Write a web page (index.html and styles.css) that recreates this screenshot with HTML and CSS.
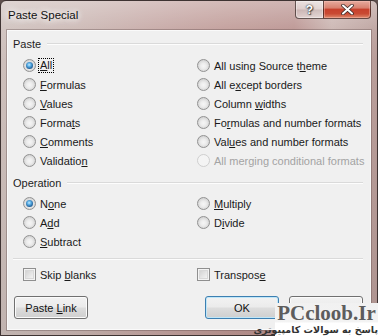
FILE: index.html
```html
<!DOCTYPE html>
<html>
<head>
<meta charset="utf-8">
<link rel="stylesheet" href="styles.css">
</head>
<body>
<div class="window">
  <div class="titlebar">
    <span class="title">Paste Special</span>
    <div class="caption-buttons">
      <div class="cap-btn help"><span>?</span></div>
      <div class="cap-btn close">
        <svg width="13" height="11" viewBox="0 0 13 11">
          <path d="M2 1.5 L11 9.5 M11 1.5 L2 9.5" stroke="#3a2a28" stroke-width="3.6" stroke-linecap="round"/>
          <path d="M2 1.5 L11 9.5 M11 1.5 L2 9.5" stroke="#ffffff" stroke-width="2" stroke-linecap="round"/>
        </svg>
      </div>
    </div>
  </div>
  <div class="client">
    <div class="group-label"><span>Paste</span><div class="gl-line"></div></div>
    <div class="opts paste-opts">
      <label class="opt"><span class="radio checked"></span><span class="focus"><u>A</u>ll</span></label>
      <label class="opt"><span class="radio"></span><span><u>F</u>ormulas</span></label>
      <label class="opt"><span class="radio"></span><span><u>V</u>alues</span></label>
      <label class="opt"><span class="radio"></span><span>Forma<u>t</u>s</span></label>
      <label class="opt"><span class="radio"></span><span><u>C</u>omments</span></label>
      <label class="opt"><span class="radio"></span><span>Validatio<u>n</u></span></label>
      <label class="opt"><span class="radio"></span><span>All using Source t<u>h</u>eme</span></label>
      <label class="opt"><span class="radio"></span><span>All e<u>x</u>cept borders</span></label>
      <label class="opt"><span class="radio"></span><span>Column <u>w</u>idths</span></label>
      <label class="opt"><span class="radio"></span><span>Fo<u>r</u>mulas and number formats</span></label>
      <label class="opt"><span class="radio"></span><span>Val<u>u</u>es and number formats</span></label>
      <label class="opt disabled"><span class="radio"></span><span>All merging conditional formats</span></label>
    </div>
    <div class="group-label op-label"><span>Operation</span><div class="gl-line"></div></div>
    <div class="opts op-opts">
      <label class="opt"><span class="radio checked"></span><span>N<u>o</u>ne</span></label>
      <label class="opt"><span class="radio"></span><span>A<u>d</u>d</span></label>
      <label class="opt"><span class="radio"></span><span><u>S</u>ubtract</span></label>
      <label class="opt"><span class="radio"></span><span><u>M</u>ultiply</span></label>
      <label class="opt"><span class="radio"></span><span>D<u>i</u>vide</span></label>
    </div>
    <div class="separator"></div>
    <div class="opts check-opts">
      <label class="opt"><span class="check"></span><span>Skip <u>b</u>lanks</span></label>
      <label class="opt"><span class="check"></span><span>Transpos<u>e</u></span></label>
    </div>
    <div class="buttons">
      <button class="btn">Paste <u>L</u>ink</button>
      <div class="spacer"></div>
      <button class="btn default">OK</button>
      <button class="btn cancel"><span class="btn-text">Cancel</span></button>
    </div>
  </div>
</div>
<div class="watermark">
  <div class="wm-title">PCcloob.Ir</div>
  <div class="wm-sub">پاسخ به سوالات کامپیوتری</div>
</div>
</body>
</html>
```
FILE: styles.css
```css
html, body {
  margin: 0;
  padding: 0;
}
body {
  width: 378px;
  height: 336px;
  overflow: hidden;
  background: #5e4f4d;
  font-family: "Liberation Sans", Arial, sans-serif;
  font-size: 11px;
  color: #000;
  position: relative;
}
.window {
  box-sizing: border-box;
  width: 378px;
  height: 336px;
  border: 1px solid #3e3332;
  border-radius: 6px 6px 0 0;
  padding: 0 6px 5px 6px;
  display: flex;
  flex-direction: column;
  background:
    linear-gradient(to bottom, rgba(255,255,255,0.35) 0px, rgba(255,255,255,0.1) 30px, rgba(0,0,0,0) 60px, rgba(0,0,0,0.06) 100%),
    linear-gradient(to right, #cdbfbb 0%, #c9b5b1 20%, #c2a19e 45%, #bd9793 60%, #b78e8b 78%, #c8b1ad 88%, #b89c98 100%);
}
.titlebar {
  height: 29px;
  display: flex;
  justify-content: space-between;
  align-items: flex-start;
}
.title {
  padding: 7px 0 0 1px;
  line-height: 15px;
  font-size: 11.5px;
  color: #111;
  text-shadow: 0 0 6px #fff, 0 0 8px rgba(255,255,255,0.9), 0 0 12px rgba(255,255,255,0.7);
}
.caption-buttons {
  display: flex;
  height: 18px;
}
.cap-btn {
  box-sizing: border-box;
  height: 18px;
  border: 1px solid rgba(58,40,38,0.75);
  border-top: none;
  display: flex;
  align-items: center;
  justify-content: center;
}
.help {
  width: 28px;
  border-radius: 0 0 0 4px;
  border-right: none;
  background: linear-gradient(to bottom, rgba(255,255,255,0.55) 0%, rgba(255,255,255,0.35) 48%, rgba(200,190,190,0.35) 52%, rgba(255,255,255,0.45) 100%);
  box-shadow: inset 0 0 0 1px rgba(255,255,255,0.35);
}
.help span {
  font-family: "Liberation Sans", sans-serif;
  font-weight: bold;
  font-size: 12px;
  color: #fff;
  line-height: 12px;
  text-shadow: 0 0 1px #333, 0 0 2px #444, 1px 1px 1px #555;
}
.close {
  width: 48px;
  border-radius: 0 0 4px 0;
  background: linear-gradient(to bottom, #e6ab9e 0%, #d88270 40%, #c7412c 50%, #c94a33 75%, #de8a6d 100%);
  box-shadow: inset 0 0 0 1px rgba(255,200,190,0.4);
}
.client {
  flex: 1;
  background: #f0f0f0;
  box-shadow: inset 0 0 0 1px #fafafa, 0 0 0 1px rgba(90,70,68,0.35);
  padding: 6px 8px 0 6px;
  display: flex;
  flex-direction: column;
}
.group-label {
  height: 16px;
  display: flex;
  align-items: center;
  color: #1e1e1e;
}
.gl-line {
  flex: 1;
  margin-left: 6px;
  height: 1px;
  background: #dadada;
  border-bottom: 1px solid #fdfdfd;
}
.op-label {
  margin-top: 5px;
}
.opts {
  display: grid;
  grid-auto-flow: column;
  grid-template-columns: 174px 1fr;
  padding-left: 10px;
}
.paste-opts {
  margin-top: 4px;
  grid-template-rows: repeat(6, 19px);
}
.op-opts {
  margin-top: 3px;
  grid-template-rows: repeat(3, 19px);
}
.check-opts {
  margin-top: 5px;
  grid-template-rows: 19px;
}
.opt {
  display: flex;
  align-items: center;
  gap: 4px;
  white-space: nowrap;
  color: #1a1a1a;
}
.opt u {
  text-underline-offset: 1px;
}
.opt.disabled {
  color: #a3a3a3;
}
.radio {
  position: relative;
  box-sizing: border-box;
  width: 13px;
  height: 13px;
  flex: none;
  border-radius: 50%;
  border: 1px solid #929292;
  background: radial-gradient(circle at 50% 55%, #f6f6f6 0%, #ececec 35%, #d2d2d2 75%, #c4c4c4 100%);
}
.radio.checked::after {
  content: "";
  position: absolute;
  left: 2px;
  top: 2px;
  width: 7px;
  height: 7px;
  border-radius: 50%;
  background: radial-gradient(circle at 45% 40%, #c6ecff 0%, #5fb2e8 30%, #1f5f98 70%, #173f6a 100%);
}
.disabled .radio {
  border-color: #cfcfcf;
  background: #f4f4f4;
}
.check {
  box-sizing: border-box;
  width: 13px;
  height: 13px;
  flex: none;
  border: 1px solid #8f8f8f;
  background: linear-gradient(135deg, #cbcbcb 0%, #e6e6e6 55%, #fbfbfb 100%);
  box-shadow: inset 0 0 0 1px #f4f4f4, inset 0 0 0 2px #d8d8d8;
}
.focus {
  margin-left: -2px;
  padding: 0 1px;
  border: 1px dotted #000;
  line-height: 13px;
}
.separator {
  margin-top: 7px;
  height: 1px;
  background: #dadada;
  border-bottom: 1px solid #fdfdfd;
}
.buttons {
  margin-top: 12px;
  display: flex;
  gap: 10px;
  padding-left: 1px;
}
.spacer {
  flex: 1;
}
.btn {
  box-sizing: border-box;
  width: 74px;
  height: 23px;
  padding: 0;
  border: 1px solid #707070;
  border-radius: 3px;
  font-family: inherit;
  font-size: 11px;
  color: #111;
  background: linear-gradient(to bottom, #f2f2f2 0%, #ebebeb 48%, #dddddd 52%, #cfcfcf 100%);
  box-shadow: inset 0 0 0 1px #fbfbfb;
}
.btn.default {
  border-color: #3c7fb1;
  box-shadow: inset 0 0 0 1px #bfe6f8;
}
.cancel .btn-text {
  visibility: hidden;
}
.watermark {
  position: absolute;
  left: 275px;
  top: 303px;
  width: 103px;
  height: 33px;
  background: linear-gradient(to bottom, #f1f1f1 0%, #f3f3f3 58%, #ffffff 60%, #ffffff 100%);
  text-align: center;
}
.wm-title {
  font-family: "Liberation Serif", serif;
  font-weight: bold;
  font-size: 21px;
  line-height: 20px;
  color: #5d5d5d;
}
.wm-sub {
  font-family: "DejaVu Sans", sans-serif;
  font-weight: bold;
  font-size: 9.5px;
  line-height: 13px;
  color: #333;
  direction: rtl;
  white-space: nowrap;
}
```
